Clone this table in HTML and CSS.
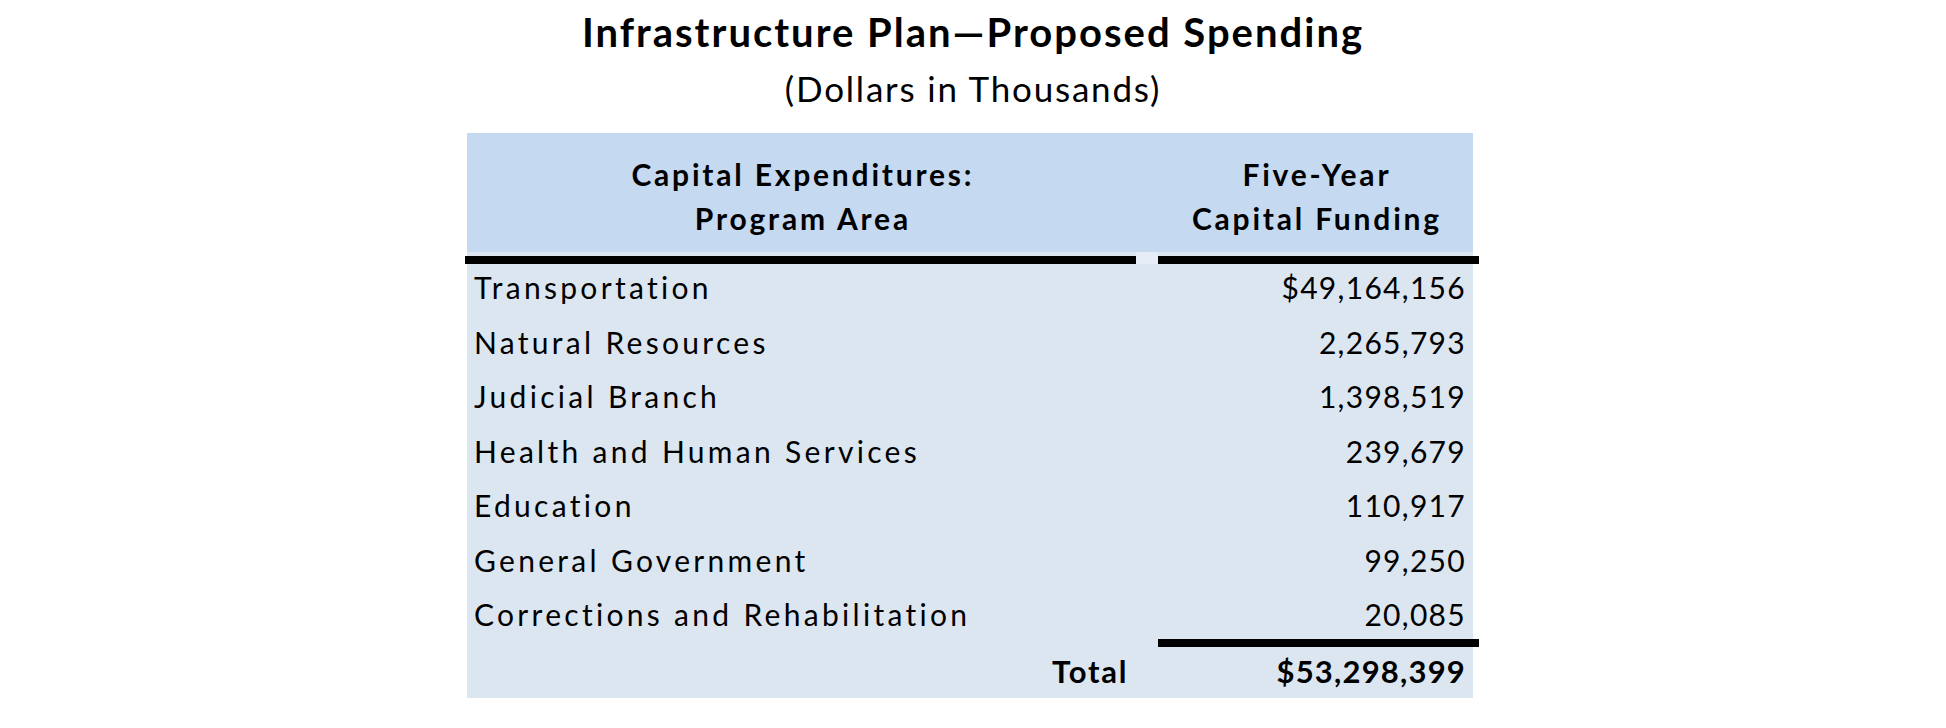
FILE: index.html
```html
<!DOCTYPE html>
<html lang="en">
<head>
<meta charset="utf-8">
<title>Infrastructure Plan—Proposed Spending</title>
<link rel="stylesheet" href="styles.css">
</head>
<body>
<div class="page">
  <h1 class="title">Infrastructure Plan—Proposed Spending</h1>
  <p class="subtitle">(Dollars in Thousands)</p>
  <div class="table">
    <div class="head">
      <div class="hcell">Capital Expenditures:<br>Program Area</div>
      <div class="gap"></div>
      <div class="hcell">Five-Year<br>Capital Funding</div>
    </div>
    <div class="rulerow">
      <div class="rule rule-left"></div>
      <div class="gap gap-light"></div>
      <div class="rule rule-right"></div>
    </div>
    <div class="row"><div class="label">Transportation</div><div class="gap"></div><div class="value">$49,164,156</div></div>
    <div class="row"><div class="label">Natural Resources</div><div class="gap"></div><div class="value">2,265,793</div></div>
    <div class="row"><div class="label">Judicial Branch</div><div class="gap"></div><div class="value">1,398,519</div></div>
    <div class="row"><div class="label">Health and Human Services</div><div class="gap"></div><div class="value">239,679</div></div>
    <div class="row"><div class="label">Education</div><div class="gap"></div><div class="value">110,917</div></div>
    <div class="row"><div class="label">General Government</div><div class="gap"></div><div class="value">99,250</div></div>
    <div class="row"><div class="label">Corrections and Rehabilitation</div><div class="gap"></div><div class="value">20,085</div></div>
    <div class="totalrule">
      <div></div>
      <div></div>
      <div class="rule rule-right"></div>
    </div>
    <div class="row total"><div class="label">Total</div><div class="gap"></div><div class="value">$53,298,399</div></div>
  </div>
</div>
</body>
</html>
```

FILE: styles.css
```css
html, body {
  margin: 0;
  padding: 0;
  background: #ffffff;
}

.page {
  width: 1946px;
  font-family: "Lato", "Liberation Sans", sans-serif;
  color: #000000;
}

.title {
  margin: 8px 0 0;
  font-size: 40px;
  line-height: 48px;
  font-weight: 700;
  text-align: center;
  letter-spacing: 2px;
}

.subtitle {
  margin: 12px 0 0;
  font-size: 35px;
  line-height: 40px;
  font-weight: 400;
  text-align: center;
  letter-spacing: 1.8px;
}

.table {
  margin: 25px 0 0 467px;
  width: 1006px;
  background: #dce6f1;
}

.head,
.rulerow,
.row,
.totalrule {
  display: grid;
  grid-template-columns: 669px 22px 315px;
}

.head {
  background: #c5d9f1;
  height: 119px;
  box-sizing: border-box;
  padding-top: 19px;
}

.hcell {
  font-size: 30px;
  line-height: 44px;
  font-weight: 700;
  text-align: center;
  letter-spacing: 2.8px;
  padding-left: 2.8px;
}

.rulerow {
  height: 12px;
  align-items: end;
}

.rule {
  height: 8px;
  background: #000000;
}

.rule-left {
  margin-left: -2px;
}

.rule-right {
  margin-right: -6px;
}

.gap-light {
  height: 12px;
  background: #e6edf6;
}

.row {
  height: 54.5px;
  box-sizing: border-box;
  padding-bottom: 8px;
  font-size: 30px;
  line-height: 46.5px;
  font-weight: 400;
}

.label {
  padding-left: 7px;
  white-space: nowrap;
  letter-spacing: 3.3px;
}

.value {
  text-align: right;
  padding-right: 7px;
  letter-spacing: 1.3px;
}

.totalrule {
  height: 8px;
  margin-top: -6.5px;
}

.row.total {
  height: 50.5px;
  padding-bottom: 2.5px;
  font-size: 31px;
  line-height: 48px;
  font-weight: 700;
}

.row.total .label {
  text-align: right;
  padding-left: 0;
  padding-right: 7.7px;
  letter-spacing: 1.8px;
}

.row.total .value {
  letter-spacing: 1.2px;
}
```
